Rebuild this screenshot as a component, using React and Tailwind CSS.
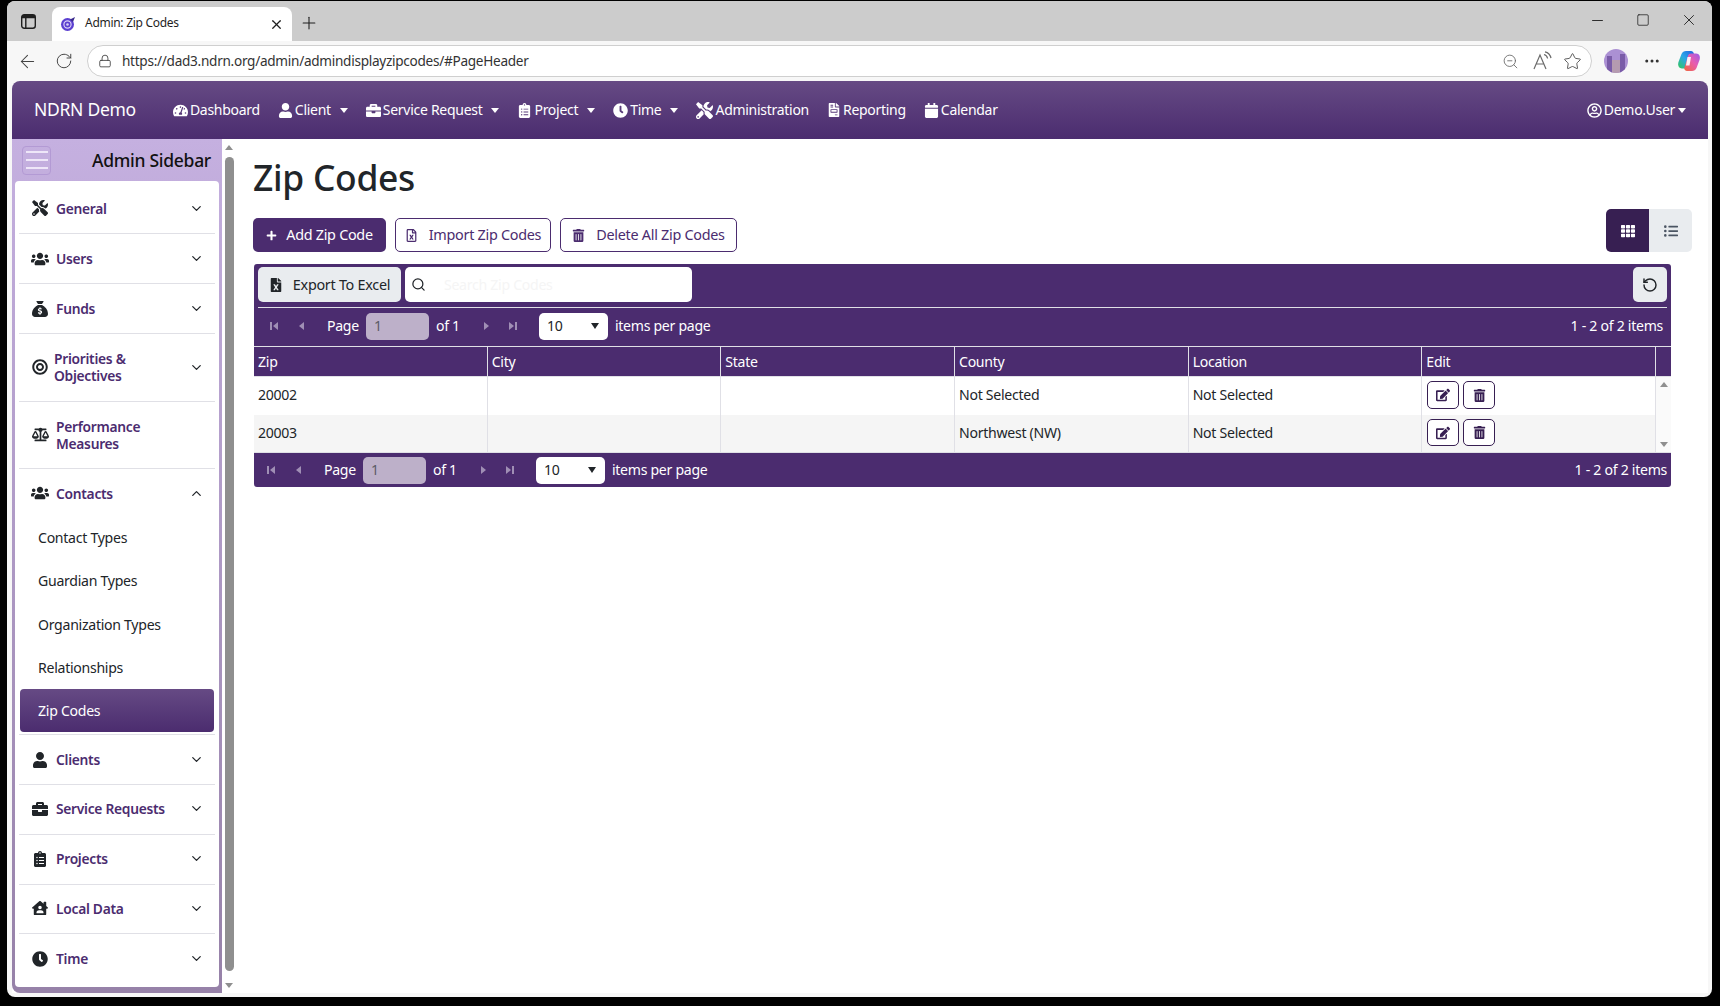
import {
  FaTachometerAlt, FaUser, FaBriefcase, FaClipboardList, FaClock, FaTools, FaFileInvoice, FaCalendar,
  FaRegUserCircle, FaUsers, FaBullseye, FaBalanceScale, FaHouseUser, FaPlus, FaRegFileExcel, FaTrashAlt,
  FaFileExcel, FaTh, FaListUl, FaEdit,
} from "react-icons/fa";
import { FaSackDollar } from "react-icons/fa6";
import { ChevronDown, ChevronUp, Search, RotateCw, RotateCcw, ArrowLeft, Lock, ZoomOut, Star, Minus, Square, X, Plus, Ellipsis } from "lucide-react";

const navItems = [
  { icon: FaTachometerAlt, label: "Dashboard" },
  { icon: FaUser, label: "Client", caret: true },
  { icon: FaBriefcase, label: "Service Request", caret: true },
  { icon: FaClipboardList, label: "Project", caret: true },
  { icon: FaClock, label: "Time", caret: true },
  { icon: FaTools, label: "Administration", size: 17 },
  { icon: FaFileInvoice, label: "Reporting", size: 14 },
  { icon: FaCalendar, label: "Calendar" },
];

const contactLinks = ["Contact Types", "Guardian Types", "Organization Types", "Relationships"];

function Caret({ className = "ml-[7px]" }) {
  return <span className={`h-0 w-0 border-x-[4.5px] border-t-[5px] border-x-transparent border-t-white ${className}`} />;
}

function NavItem({ icon: Icon, label, caret, size = 15 }) {
  return (
    <div className="flex items-center gap-[2px] text-white">
      <Icon size={size} />
      <span className="mb-[2px]">{label}</span>
      {caret && <Caret />}
    </div>
  );
}

function SideRow({ icon: Icon, label, height, iconSize = 16, open, chevron = true, tight, shift = "" }) {
  const Chevron = open ? ChevronUp : ChevronDown;
  return (
    <div className={`flex items-center pr-[15px] pl-[16px] text-[13.8px] leading-[17px] font-semibold text-[#4b2c6f] ${height} ${shift}`}>
      <span className="flex w-[18px] justify-center text-[#212529]">
        <Icon size={iconSize} />
      </span>
      <span className={`flex-1 ${tight ? "ml-[5px]" : "ml-[7px]"}`}>{label}</span>
      {chevron && <Chevron size={15} strokeWidth={2} className="text-[#212529]" />}
    </div>
  );
}

function Divider() {
  return <div className="mx-[4px] h-px bg-[#e0e0e6]" />;
}

function PagerArrow({ dir, bar }) {
  return (
    <svg width="10" height="10" viewBox="0 0 10 10" fill="#a08fb5" className={dir === "left" ? "" : "rotate-180"}>
      {bar && <rect x="1" y="1" width="2" height="8" />}
      <path d={bar ? "M9 1v8L4 5z" : "M8 1v8L3 5z"} />
    </svg>
  );
}

function Pager({ className, rightClass }) {
  return (
    <div className={`flex items-center text-white ${className}`}>
      <PagerArrow dir="left" bar />
      <span className="ml-[17px]"><PagerArrow dir="left" /></span>
      <span className="ml-[21px]">Page</span>
      <span className="ml-[7px] flex h-[27px] w-[63px] shrink-0 items-center rounded-[5px] bg-[#bdb0c9] pl-[8px] text-[#5b5b66]">1</span>
      <span className="ml-[7px]">of 1</span>
      <span className="ml-[22px]"><PagerArrow dir="right" /></span>
      <span className="ml-[16px]"><PagerArrow dir="right" bar /></span>
      <span className="ml-[21px] flex h-[27px] w-[69px] shrink-0 items-center justify-between rounded-[5px] bg-white pr-[9px] pl-[8px] text-[#212529]">
        10
        <span className="h-0 w-0 border-x-[4px] border-t-[6px] border-x-transparent border-t-[#212529]" />
      </span>
      <span className="ml-[7px]">items per page</span>
      <span className={`ml-auto ${rightClass}`}>1 - 2 of 2 items</span>
    </div>
  );
}

function GridRow({ zip, county, bg, rowH, buttonH }) {
  return (
    <div className={`grid grid-cols-6 pb-[2px] text-[#212529] ${bg} ${rowH}`}>
      <div className="flex items-center pl-[4px]">{zip}</div>
      <div />
      <div />
      <div className="flex items-center pl-[4px]">{county}</div>
      <div className="flex items-center pl-[4px]">Not Selected</div>
      <div className="flex items-center gap-[4px] pl-[5px]">
        <button type="button" className={`flex w-[32px] items-center justify-center rounded-[5px] border border-[#371f52] bg-white text-[#371f52] ${buttonH}`}>
          <FaEdit size={14} />
        </button>
        <button type="button" className={`flex w-[32px] items-center justify-center rounded-[5px] border border-[#371f52] bg-white text-[#371f52] ${buttonH}`}>
          <FaTrashAlt size={13} />
        </button>
      </div>
    </div>
  );
}

function Favicon() {
  return (
    <svg width="16" height="16" viewBox="0 0 16 16" fill="none">
      <circle cx="7.5" cy="8.500" r="6.500" fill="#5b3fd0" />
      <circle cx="7.5" cy="8.500" r="3.600" stroke="#d9cff5" strokeWidth="1.200" />
      <circle cx="7.5" cy="8.500" r="1.300" fill="#d9cff5" />
      <path d="M10 3.500 15 1l-2 5z" fill="#3a2a8c" />
    </svg>
  );
}

function TabsIcon() {
  return (
    <svg width="17" height="17" viewBox="0 0 17 17" fill="none" stroke="#1f1f1f" strokeWidth="1.400">
      <rect x="1.700" y="1.700" width="13.600" height="13.600" rx="2.500" />
      <path d="M1.700 4.500h13.600M5.800 4.500v10.800" />
      <rect x="2" y="2" width="13" height="2.500" fill="#1f1f1f" stroke="none" />
    </svg>
  );
}

function ReadAloud() {
  return (
    <svg width="22" height="20" viewBox="0 0 22 20" fill="none" stroke="#6b6b6b" strokeWidth="1.200">
      <path d="M2 18 8 4l6 14M4.200 13h7.600" />
      <path d="M12 3.500c2 .5 3.200 2 3.600 4M13 .8c3.400.7 5.300 3 6 6.400" />
    </svg>
  );
}

function Avatar() {
  return (
    <svg width="24" height="24" viewBox="0 0 24 24">
      <clipPath id="avatar-clip"><circle cx="12" cy="12" r="12" /></clipPath>
      <g clipPath="url(#avatar-clip)">
        <rect width="24" height="24" fill="#ab90d3" />
        <rect x="3" y="7" width="5" height="17" fill="#7a5ca8" />
        <rect x="16" y="5" width="5" height="19" fill="#7a5ca8" />
        <rect x="8" y="11" width="8" height="13" fill="#b59bb0" />
      </g>
    </svg>
  );
}

function Copilot() {
  return (
    <svg width="24" height="24" viewBox="0 0 24 24">
      <defs>
        <linearGradient id="cp-a" x1="0" y1="1" x2="1" y2="0">
          <stop offset="0" stopColor="#34c759" />
          <stop offset="0.5" stopColor="#2aa7e8" />
          <stop offset="1" stopColor="#1f5fe0" />
        </linearGradient>
        <linearGradient id="cp-b" x1="0" y1="1" x2="1" y2="0">
          <stop offset="0" stopColor="#f0663a" />
          <stop offset="0.55" stopColor="#e85bb0" />
          <stop offset="1" stopColor="#9a5be8" />
        </linearGradient>
      </defs>
      <path d="M9 2h5c1.500 0 2.400 1 2.800 2.400L13 17c-.5 1.600-1.600 2.400-3 2.400H5C1.500 19.400.5 16 1.500 13L4.500 5C5.300 3 7 2 9 2z" fill="url(#cp-a)" />
      <path d="M15 22h-5c-1.500 0-2.400-1-2.800-2.400L11 7c.5-1.600 1.600-2.400 3-2.400h5c3.500 0 4.500 3.400 3.500 6.400L19.500 19c-.8 2-2.500 3-4.500 3z" fill="url(#cp-b)" />
      <path d="M10.500 8h3.500l-1.500 8.500h-3.500z" fill="#fff" opacity="0.9" />
    </svg>
  );
}

export default function App() {
  return (
    <div className="h-[1006px] w-[1720px] overflow-hidden bg-black pt-px pr-[8px] pb-[9px] pl-[7px] font-['Noto_Sans','Open_Sans',sans-serif] text-[14.1px] tracking-[-0.02em]">
      <div className="flex h-full flex-col overflow-hidden rounded-[8px] bg-[#f7f7f7]">
        {/* tab strip */}
        <div className="flex h-[40px] shrink-0 items-end bg-[#cccccc] text-[#1f1f1f]">
          <span className="mb-[11px] ml-[13px]"><TabsIcon /></span>
          <div className="ml-[15px] flex h-[34px] w-[240px] items-center rounded-t-[8px] bg-white pr-[8px] pl-[8px]">
            <Favicon />
            <span className="mb-[2px] ml-[9px] flex-1 text-[12px]">Admin: Zip Codes</span>
            <X size={15} />
          </div>
          <Plus size={20} strokeWidth={1.300} className="mb-[8px] ml-[7px]" />
          <div className="mb-[12px] ml-auto flex items-center gap-[30px] pr-[14px]">
            <Minus size={17} strokeWidth={1.300} />
            <Square size={14} strokeWidth={1.300} />
            <X size={18} strokeWidth={1.200} />
          </div>
        </div>
        {/* address bar */}
        <div className="flex h-[40px] shrink-0 items-center text-[#444]">
          <ArrowLeft size={21} strokeWidth={1.200} className="ml-[10px]" />
          <RotateCw size={18} strokeWidth={1.300} className="ml-[17px]" />
          <div className="ml-[14px] flex h-[32px] w-[1505px] items-center rounded-full border border-[#cfcfcf] bg-white pr-[9px] pl-[10px] text-[13.600px]">
            <Lock size={14} strokeWidth={1.500} />
            <span className="ml-[10px] flex-1 text-[#333]">https://dad3.ndrn.org/admin/admindisplayzipcodes/#PageHeader</span>
            <ZoomOut size={17} strokeWidth={1.200} className="mr-[13px] text-[#666]" />
            <ReadAloud />
            <Star size={19} strokeWidth={1.200} className="ml-[9px] text-[#555]" />
          </div>
          <span className="ml-[12px]"><Avatar /></span>
          <Ellipsis size={18} className="ml-[15px] text-[#333]" />
          <span className="ml-[16px]"><Copilot /></span>
        </div>
        {/* page */}
        <div className="flex min-h-0 flex-1 flex-col pr-[4px] pb-[4px] pl-[5px]">
          <header className="flex h-[58px] shrink-0 items-center rounded-t-[8px] bg-gradient-to-b from-[#664a84] to-[#4b2c6f] px-[22px] text-[14px]">
            <span className="mr-[37px] mb-[2px] text-[17.500px] font-normal text-white">NDRN Demo</span>
            <nav className="flex items-center gap-[18px]">
              {navItems.map((item) => <NavItem key={item.label} {...item} />)}
            </nav>
            <div className="ml-auto flex items-center gap-[2px] text-white">
              <FaRegUserCircle size={15} />
              <span className="mb-[2px]">Demo.User</span>
              <Caret className="ml-[1px]" />
            </div>
          </header>
          <div className="flex min-h-0 flex-1 bg-white">
            {/* sidebar */}
            <aside className="flex h-full w-[210px] shrink-0 flex-col rounded-bl-[8px] bg-gradient-to-b from-[#c5b0e0] to-[#9681a8] px-[3px] pb-[6px]">
              <div className="flex h-[42px] shrink-0 items-center justify-between pr-[8px] pl-[7px]">
                <span className="flex h-[29px] w-[29px] flex-col items-center justify-center gap-[6px] rounded-[4px] border border-[#b39ad4]">
                  <span className="h-[2px] w-[22px] bg-[#eee6f8]" />
                  <span className="h-[2px] w-[22px] bg-[#eee6f8]" />
                  <span className="h-[2px] w-[22px] bg-[#eee6f8]" />
                </span>
                <span className="text-[17.500px] font-medium text-[#111]">Admin Sidebar</span>
              </div>
              <div className="flex min-h-0 flex-1 flex-col rounded-[4px] bg-white">
                <SideRow icon={FaTools} label="General" height="h-[52px]" shift="pt-[2px]" />
                <Divider />
                <SideRow icon={FaUsers} label="Users" height="h-[49px]" iconSize={18} />
                <Divider />
                <SideRow icon={FaSackDollar} label="Funds" height="h-[49px]" />
                <Divider />
                <SideRow icon={FaBullseye} label="Priorities & Objectives" height="h-[67px]" shift="pb-[1px]" tight />
                <Divider />
                <SideRow icon={FaBalanceScale} label={<>Performance<br />Measures</>} height="h-[66px]" iconSize={17} shift="pb-[1px]" chevron={false} />
                <Divider />
                <SideRow icon={FaUsers} label="Contacts" height="h-[47px]" iconSize={18} shift="pt-[1px]" open />
                <div className="flex flex-col">
                  {contactLinks.map((link) => (
                    <div key={link} className="flex h-[43.300px] items-center pl-[23px] font-normal text-[#212529]">{link}</div>
                  ))}
                </div>
                <div className="mx-[5px] flex h-[43px] items-center rounded-[4px] bg-gradient-to-b from-[#664a84] to-[#4b2c6f] pl-[18px] text-white">Zip Codes</div>
                <div className="mt-[2px]"><Divider /></div>
                <SideRow icon={FaUser} label="Clients" height="h-[49px]" />
                <Divider />
                <SideRow icon={FaBriefcase} label="Service Requests" height="h-[49px]" shift="pb-[2px]" />
                <Divider />
                <SideRow icon={FaClipboardList} label="Projects" height="h-[49px]" shift="pb-[2px]" />
                <Divider />
                <SideRow icon={FaHouseUser} label="Local Data" height="h-[48px]" shift="pb-[2px]" />
                <Divider />
                <SideRow icon={FaClock} label="Time" height="h-[52px]" shift="pb-[3px]" />
              </div>
            </aside>
            {/* sidebar scrollbar */}
            <div className="flex h-full w-[14px] shrink-0 flex-col items-center pt-[6px] pb-[5px]">
              <span className="h-0 w-0 border-x-[4px] border-b-[5px] border-x-transparent border-b-[#8f8f8f]" />
              <span className="mt-[7px] mb-[12px] w-[9px] flex-1 rounded-full bg-[#8f8f8f]" />
              <span className="h-0 w-0 border-x-[4px] border-t-[5px] border-x-transparent border-t-[#8f8f8f]" />
            </div>
            {/* main */}
            <main className="min-w-0 flex-1 pt-[17px] pl-[17px]">
              <h1 className="text-[35.400px] leading-[43px] font-medium text-[#212529]">Zip Codes</h1>
              <div className="mt-[10px] flex items-end pr-[16px] text-[14.400px]">
                <div className="flex items-center gap-[9px]">
                  <button type="button" className="flex h-[34px] w-[133px] items-center justify-center gap-[9px] rounded-[5px] bg-[#4b2c6f] text-white">
                    <FaPlus size={11} />Add Zip Code
                  </button>
                  <button type="button" className="flex h-[34px] w-[156px] items-center justify-center gap-[11px] rounded-[5px] border border-[#4b2c6f] bg-white text-[#4b2c6f]">
                    <FaRegFileExcel size={13} />Import Zip Codes
                  </button>
                  <button type="button" className="flex h-[34px] w-[177px] items-center justify-center gap-[11px] rounded-[5px] border border-[#4b2c6f] bg-white text-[#4b2c6f]">
                    <FaTrashAlt size={13} />Delete All Zip Codes
                  </button>
                </div>
                <div className="ml-auto flex h-[43px] w-[86px] overflow-hidden rounded-[5px]">
                  <span className="flex flex-1 items-center justify-center bg-[#371f52] text-white"><FaTh size={14} /></span>
                  <span className="flex flex-1 items-center justify-center bg-[#e9ecef] text-[#4b5563]"><FaListUl size={14} /></span>
                </div>
              </div>
              {/* grid */}
              <section className="mt-[12px] mr-[37px] ml-[1px] overflow-hidden rounded-[3px] bg-[#4b2c6f]">
                <div className="flex h-[43px] items-start gap-[4px] px-[4px] pt-[3px]">
                  <button type="button" className="flex h-[35px] w-[143px] items-center justify-center gap-[10px] rounded-[5px] bg-[#e9ecef] text-[14.400px] text-[#212529]">
                    <FaFileExcel size={14} />Export To Excel
                  </button>
                  <div className="flex h-[35px] w-[287px] items-center rounded-[5px] bg-white pl-[6px] text-[#f5f5f5]">
                    <Search size={15} strokeWidth={2} className="text-[#212529]" />
                    <span className="ml-[18px]">Search Zip Codes</span>
                  </div>
                  <button type="button" className="ml-auto flex h-[35px] w-[34px] items-center justify-center rounded-[5px] bg-[#e9ecef] text-[#212529]">
                    <RotateCcw size={16} strokeWidth={2.200} />
                  </button>
                </div>
                <div className="mx-[4px] h-px bg-[#e0e0e6]" />
                <Pager className="h-[38px] pb-[2px] pl-[15px]" rightClass="pr-[8px]" />
                <div className="h-px bg-[#e0e0e6]" />
                <div className="flex h-[30px] border-b border-[#e0e0e6] pr-[15px] text-white">
                  <div className="grid flex-1 grid-cols-6">
                    {["Zip", "City", "State", "County", "Location", "Edit"].map((col) => (
                      <div key={col} className="flex items-center border-r border-[#e0e0e6] pl-[4px]">{col}</div>
                    ))}
                  </div>
                </div>
                <div className="flex h-[76px] border-b border-[#e0e0e6] bg-[#fafafa]">
                  <div className="relative flex flex-1 flex-col">
                    <GridRow zip="20002" county="Not Selected" bg="bg-white" rowH="h-[38px]" buttonH="h-[28px]" />
                    <GridRow zip="20003" county="Northwest (NW)" bg="bg-[#f5f5f5]" rowH="h-[37px]" buttonH="h-[27px]" />
                    <div className="absolute inset-0 grid grid-cols-6">
                      {[0, 1, 2, 3, 4, 5].map((col) => (
                        <div key={col} className="border-r border-[#e0e0e6]" />
                      ))}
                    </div>
                  </div>
                  <div className="flex w-[15px] flex-col items-center justify-between py-[5px]">
                    <span className="h-0 w-0 border-x-[4px] border-b-[5px] border-x-transparent border-b-[#8f8f8f]" />
                    <span className="h-0 w-0 border-x-[4px] border-t-[5px] border-x-transparent border-t-[#8f8f8f]" />
                  </div>
                </div>
                <Pager className="h-[34px] pl-[12px]" rightClass="pr-[4px]" />
              </section>
            </main>
          </div>
        </div>
      </div>
    </div>
  );
}
